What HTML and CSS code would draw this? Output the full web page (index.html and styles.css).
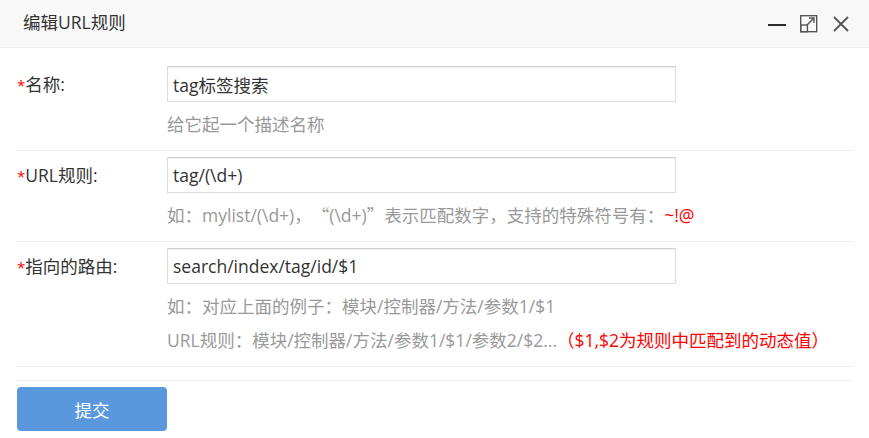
FILE: index.html
```html
<!DOCTYPE html>
<html lang="zh">
<head>
<meta charset="utf-8">
<link rel="stylesheet" href="styles.css">
</head>
<body>
<div class="dialog">
  <div class="header">
    <span class="title">编辑URL规则</span>
    <div class="tools">
      <svg class="ico" width="20" height="20" viewBox="0 0 20 20"><rect x="1" y="10" width="18" height="2" fill="#2b2b2b"/></svg>
      <svg class="ico" width="20" height="20" viewBox="0 0 20 20" fill="none" stroke="#555" stroke-width="1.4">
        <rect x="1.7" y="1.7" width="16" height="16"/>
        <rect x="1.7" y="11" width="6.7" height="6.7"/>
        <path d="M8 11 L15 4"/>
        <path d="M10 4 H15 V9"/>
      </svg>
      <svg class="ico" width="20" height="20" viewBox="0 0 20 20" fill="none" stroke="#555" stroke-width="1.8"><path d="M3 3 L17 17 M17 3 L3 17"/></svg>
    </div>
  </div>
  <form class="form">
    <div class="row">
      <label class="label"><span class="req">*</span>名称:</label>
      <div class="field">
        <input class="input" type="text" value="tag标签搜索">
        <div class="hint">给它起一个描述名称</div>
      </div>
    </div>
    <div class="row">
      <label class="label"><span class="req">*</span>URL规则:</label>
      <div class="field">
        <input class="input" type="text" value="tag/(\d+)">
        <div class="hint">如：mylist/(\d+)，<span class="cjk">“</span>(\d+)<span class="cjk">”</span>表示匹配数字，支持的特殊符号有：<span class="red">~!@</span></div>
      </div>
    </div>
    <div class="row">
      <label class="label"><span class="req">*</span>指向的路由:</label>
      <div class="field">
        <input class="input" type="text" value="search/index/tag/id/$1">
        <div class="hint">如：对应上面的例子：模块/控制器/方法/参数1/$1</div>
        <div class="hint">URL规则：模块/控制器/方法/参数1/$1/参数2/$2...<span class="red">（$1,$2为规则中匹配到的动态值）</span></div>
      </div>
    </div>
    <div class="actions">
      <button class="btn" type="button">提交</button>
    </div>
  </form>
</div>
</body>
</html>
```
FILE: styles.css
```css
* { box-sizing: border-box; }
html, body { margin: 0; padding: 0; background: #fff; }
body {
  font-family: "Open Sans", "Noto Sans CJK SC", sans-serif;
  font-size: 17.5px;
  color: #333;
  text-spacing-trim: space-all;
}
.cjk { font-family: "Noto Sans CJK SC", sans-serif; }
.dialog { width: 869px; height: 438px; overflow: hidden; }
.header {
  height: 48px;
  background: #f8f8f8;
  border-bottom: 1px solid #eee;
  display: flex;
  align-items: center;
  padding: 0 18px 4px 23px;
}
.title { flex: 1; line-height: 20px; color: #333; }
.tools { display: flex; gap: 12px; align-items: center; padding-top: 4px; }
.ico { display: block; }
.form { padding: 12px 16px 0 17px; }
.row {
  display: flex;
  padding: 6px 0 9px;
  border-bottom: 1px solid #eee;
}
.label {
  width: 150px;
  flex: none;
  height: 36px;
  line-height: 36px;
  color: #333;
}
.req { color: #f00; font-size: 15px; }
.field { flex: 1; }
.input {
  display: block;
  width: 509px;
  height: 36px;
  border: 1px solid #ddd;
  border-top-color: #d0d0d0;
  box-shadow: inset 0 1px 1px rgba(0,0,0,.06);
  padding: 0 5px;
  font: inherit;
  color: #333;
  outline: none;
}
.hint {
  line-height: 34px;
  color: #999;
  white-space: nowrap;
}
.input + .hint { margin-top: 5px; }
.red { color: #f00; }
.actions {
  margin-top: 13px;
  border-top: 1px solid #eee;
  padding-top: 6px;
}
.btn {
  width: 150px;
  height: 44px;
  border: 0;
  border-radius: 4px;
  background: #5a98de;
  color: #fff;
  font: inherit;
  cursor: pointer;
}
```
